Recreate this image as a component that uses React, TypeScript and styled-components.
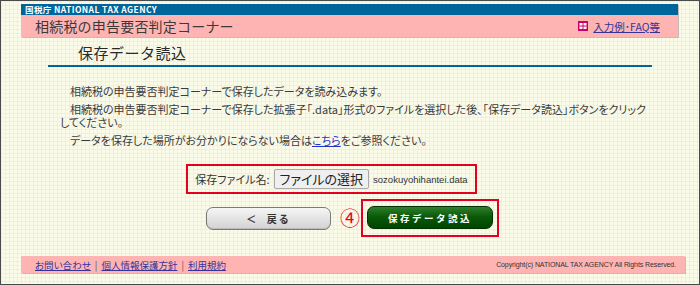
import React from 'react'
import styled, { createGlobalStyle } from 'styled-components'

const GlobalStyle = createGlobalStyle`
    html, body {
        margin: 0;
        padding: 0;
    }
    body {
        font-family: "Noto Sans CJK JP", "Liberation Sans", sans-serif;
        color: #333;
    }
`

const Frame = styled.div`
    box-sizing: border-box;
    width: 700px;
    height: 285px;
    border: 1px solid #4a4a4a;
    padding-top: 3px;
    background-color: #fbfbea;
    background-image:
        linear-gradient(#f0f0da 1px, transparent 1px),
        linear-gradient(90deg, #f0f0da 1px, transparent 1px);
    background-size: 4px 4px;
    display: flex;
    flex-direction: column;
    overflow: hidden;
`

const Header = styled.div`
    margin-left: 20px;
    width: 657px;
    box-shadow: 1px 1px 0 #c4bcbc;
`

const AgencyBar = styled.div`
    height: 11px;
    background: #00659b;
    color: #fff;
    font-size: 8.5px;
    font-weight: bold;
    line-height: 11px;
    padding-left: 4px;
    letter-spacing: 0.4px;
`

const TitleBar = styled.div`
    height: 22px;
    background: #ffb4b4;
    display: flex;
    align-items: center;
    justify-content: space-between;
    padding: 0 18px 0 14px;
`

const CornerTitle = styled.div`
    font-size: 14px;
    color: #3a3a3a;
    letter-spacing: 0.2px;
`

const HelpLink = styled.a`
    display: flex;
    align-items: center;
    gap: 5px;
    font-size: 10.5px;
    color: #33339a;
    text-decoration: underline;
    font-feature-settings: "palt";
`

const Section = styled.div`
    margin: 6px 0 0 47px;
    width: 604px;
    border-bottom: 2px solid #00659b;
    padding: 0 0 2px 30px;
    box-sizing: border-box;
`

const SectionTitle = styled.h2`
    margin: 0;
    font-size: 15px;
    font-weight: normal;
    line-height: 20px;
    color: #2a2a2a;
    letter-spacing: 0.5px;
`

const Body = styled.div`
    margin: 18px 0 0 59px;
    width: 588px;
    font-size: 11px;
    line-height: 13px;
    font-feature-settings: "palt";
    color: #3a3a3a;
`

const Para = styled.p`
    margin: 0 0 5px;
    text-indent: 10px;
`

const InlineLink = styled.a`
    color: #2233cc;
    text-decoration: underline;
`

const Row = styled.div<{ $shift: number }>`
    display: flex;
    justify-content: center;
    align-items: center;
    width: 657px;
    margin-left: 20px;
    padding-left: ${p => (p.$shift > 0 ? p.$shift * 2 : 0)}px;
    padding-right: ${p => (p.$shift < 0 ? -p.$shift * 2 : 0)}px;
    box-sizing: border-box;
`

const RedBox = styled.div`
    border: 2px solid #e4001e;
    display: flex;
    align-items: center;
`

const FileBox = styled(RedBox)`
    margin-top: 12px;
    padding: 3px 7px;
    gap: 4px;
    font-size: 11px;
    font-feature-settings: "palt";
`

const FileButton = styled.button`
    font-family: "Noto Sans CJK JP", sans-serif;
    font-size: 13px;
    height: 20px;
    padding: 0 5px;
    line-height: 18px;
    background: #efefef;
    border: 1px solid #a9a9a9;
    border-radius: 2px;
    color: #222;
    font-feature-settings: "palt";
`

const FileName = styled.span`
    font-family: "Liberation Sans", sans-serif;
    font-size: 9.5px;
    color: #333;
`

const ButtonRow = styled(Row)`
    margin-top: 5px;
`

const BackButton = styled.button`
    width: 125px;
    height: 23px;
    border: 1px solid #7a7a7a;
    border-radius: 7px;
    background: linear-gradient(#f6f6f6, #d2d2d2);
    box-shadow: inset 0 -1px 0 #bdbdbd;
    font-family: "Noto Sans CJK JP", sans-serif;
    font-size: 10px;
    font-weight: bold;
    color: #333;
    letter-spacing: 2px;
    word-spacing: 4px;
`

const StepMark = styled.span`
    color: #e4001e;
    font-size: 20px;
    margin: 0 1px 0 9px;
    line-height: 22px;
`

const SubmitBox = styled(RedBox)`
    padding: 5px 4px 6px;
`

const SubmitButton = styled.button`
    width: 126px;
    height: 23px;
    border: 1px solid #003300;
    border-radius: 7px;
    background: linear-gradient(#2f7f2f, #0a5a0a 45%, #004400);
    font-family: "Noto Sans CJK JP", sans-serif;
    font-size: 9.5px;
    font-weight: bold;
    color: #fff;
    letter-spacing: 2.5px;
`

const Footer = styled.div`
    margin: 19px 0 0 20px;
    width: 664px;
    height: 17px;
    background: #ffb4b4;
    box-shadow: 1px 1px 0 #c4bcbc;
    display: flex;
    align-items: center;
    justify-content: space-between;
    padding: 0 9px 0 14px;
    box-sizing: border-box;
`

const FooterLinks = styled.div`
    display: flex;
    align-items: center;
    gap: 4px;
    font-size: 9.5px;
    font-feature-settings: "palt";
`

const FooterLink = styled.a`
    color: #33339a;
    text-decoration: underline;
`

const Sep = styled.span`
    color: #555;
`

const Copyright = styled.div`
    font-family: "Liberation Sans", sans-serif;
    font-size: 7px;
    color: #333;
    letter-spacing: -0.1px;
`

const BookIcon = () => (
    <svg width="10" height="10" viewBox="0 0 10 10">
        <rect x="0" y="0" width="10" height="10" fill="#cc0066" />
        <rect x="1.5" y="2" width="3" height="6" fill="#fff" />
        <rect x="5.5" y="2" width="3" height="6" fill="#fff" />
        <rect x="1.5" y="4.5" width="7" height="1" fill="#cc0066" />
    </svg>
)

const App = () => {
    return (
        <>
            <GlobalStyle />
            <Frame>
                <Header>
                    <AgencyBar>国税庁 NATIONAL TAX AGENCY</AgencyBar>
                    <TitleBar>
                        <CornerTitle>相続税の申告要否判定コーナー</CornerTitle>
                        <HelpLink href="#">
                            <BookIcon />
                            入力例･FAQ等
                        </HelpLink>
                    </TitleBar>
                </Header>

                <Section>
                    <SectionTitle>保存データ読込</SectionTitle>
                </Section>

                <Body>
                    <Para>相続税の申告要否判定コーナーで保存したデータを読み込みます。</Para>
                    <Para>
                        相続税の申告要否判定コーナーで保存した拡張子「.data」形式のファイルを選択した後、「保存データ読込」ボタンをクリックしてください。
                    </Para>
                    <Para>
                        データを保存した場所がお分かりにならない場合は<InlineLink href="#">こちら</InlineLink>をご参照ください。
                    </Para>
                </Body>

                <Row $shift={-18}>
                    <FileBox>
                        <span>保存ファイル名:</span>
                        <FileButton>ファイルの選択</FileButton>
                        <FileName>sozokuyohihantei.data</FileName>
                    </FileBox>
                </Row>

                <ButtonRow $shift={3}>
                    <BackButton>＜ 戻る</BackButton>
                    <StepMark>④</StepMark>
                    <SubmitBox>
                        <SubmitButton>保存データ読込</SubmitButton>
                    </SubmitBox>
                </ButtonRow>

                <Footer>
                    <FooterLinks>
                        <FooterLink href="#">お問い合わせ</FooterLink>
                        <Sep>|</Sep>
                        <FooterLink href="#">個人情報保護方針</FooterLink>
                        <Sep>|</Sep>
                        <FooterLink href="#">利用規約</FooterLink>
                    </FooterLinks>
                    <Copyright>Copyright(c) NATIONAL TAX AGENCY All Rights Reserved.</Copyright>
                </Footer>
            </Frame>
        </>
    )
}

export default App
